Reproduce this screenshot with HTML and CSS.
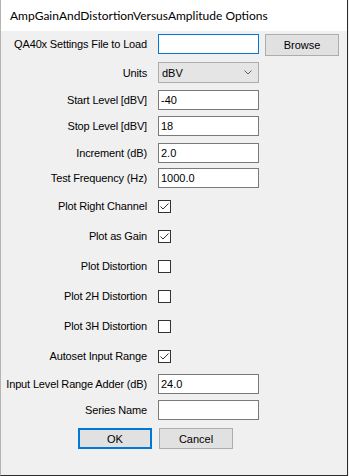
FILE: index.html
```html
<!DOCTYPE html>
<html lang="en">
<head>
    <meta charset="UTF-8">
    <meta name="viewport" content="width=device-width, initial-scale=1.0">
    <title>AmpGainAndDistortionVersusAmplitude Options</title>
    <link rel="stylesheet" href="styles.css">
</head>
<body>
    <div class="window">
        <div class="titlebar">AmpGainAndDistortionVersusAmplitude Options</div>
        <form class="content">
            <div class="row row-file">
                <label class="label">QA40x Settings File to Load</label>
                <input class="text focused" type="text" value="">
                <button class="btn browse" type="button">Browse</button>
            </div>
            <div class="row row-combo mt6">
                <label class="label">Units</label>
                <div class="combo">
                    <span>dBV</span>
                    <svg class="chevron" width="8" height="5" viewBox="0 0 8 5"><polyline points="0.5,0.5 4,4 7.5,0.5" fill="none" stroke="#606060" stroke-width="1"/></svg>
                </div>
            </div>
            <div class="row mt7">
                <label class="label">Start Level [dBV]</label>
                <input class="text" type="text" value="-40">
            </div>
            <div class="row mt6">
                <label class="label">Stop Level [dBV]</label>
                <input class="text" type="text" value="18">
            </div>
            <div class="row mt7">
                <label class="label">Increment (dB)</label>
                <input class="text" type="text" value="2.0">
            </div>
            <div class="row mt5">
                <label class="label">Test Frequency (Hz)</label>
                <input class="text" type="text" value="1000.0">
            </div>

            <!-- Checkbox rows -->
            <div class="row mt8">
                <label class="label">Plot Right Channel</label>
                <span class="check"><svg width="11" height="11" viewBox="0 0 11 11"><polyline points="1.5,5.5 4,8 9.5,2.5" fill="none" stroke="#333" stroke-width="1"/></svg></span>
            </div>
            <div class="row mt10">
                <label class="label">Plot as Gain</label>
                <span class="check"><svg width="11" height="11" viewBox="0 0 11 11"><polyline points="1.5,5.5 4,8 9.5,2.5" fill="none" stroke="#333" stroke-width="1"/></svg></span>
            </div>
            <div class="row mt10">
                <label class="label">Plot Distortion</label>
                <span class="check"></span>
            </div>
            <div class="row mt10">
                <label class="label">Plot 2H Distortion</label>
                <span class="check"></span>
            </div>
            <div class="row mt10">
                <label class="label">Plot 3H Distortion</label>
                <span class="check"></span>
            </div>
            <div class="row mt10">
                <label class="label">Autoset Input Range</label>
                <span class="check"><svg width="11" height="11" viewBox="0 0 11 11"><polyline points="1.5,5.5 4,8 9.5,2.5" fill="none" stroke="#333" stroke-width="1"/></svg></span>
            </div>

            <div class="row mt8">
                <label class="label">Input Level Range Adder (dB)</label>
                <input class="text" type="text" value="24.0">
            </div>
            <div class="row mt6">
                <label class="label">Series Name</label>
                <input class="text" type="text" value="">
            </div>
            <div class="row row-buttons mt8">
                <button class="btn default" type="submit">OK</button>
                <button class="btn" type="button">Cancel</button>
            </div>
        </form>
    </div>
</body>
</html>
```

FILE: styles.css
```css
body {
    margin: 0;
    background-color: #f0f0f0;
    font-family: "Liberation Sans", Arial, sans-serif;
    font-size: 11px;
    color: #000;
}

.window {
    width: 348px;
    height: 476px;
    box-sizing: border-box;
    background-color: #f0f0f0;
    border-left: 1px solid #b4b4b4;
    border-right: 1px solid #2b2b2b;
    border-bottom: 1px solid #2b2b2b;
}

.titlebar {
    height: 31px;
    line-height: 31px;
    padding-left: 9px;
    background-color: #fff;
    font-family: Lato, "Open Sans", sans-serif;
    font-size: 12px;
}

.content {
    display: flex;
    flex-direction: column;
    padding-top: 3px;
}

.row {
    display: flex;
    align-items: center;
    height: 20px;
}

.row-file {
    height: 22px;
    align-items: flex-start;
}

.row-file .label {
    line-height: 20px;
}

.row-combo {
    height: 21px;
}

.mt5 { margin-top: 5px; }
.mt6 { margin-top: 6px; }
.mt7 { margin-top: 7px; }
.mt8 { margin-top: 8px; }
.mt10 { margin-top: 10px; }

.label {
    width: 146px;
    margin-right: 11px;
    text-align: right;
    white-space: nowrap;
    letter-spacing: -0.15px;
}

.text {
    width: 101px;
    height: 20px;
    box-sizing: border-box;
    margin: 0;
    padding: 0 2px;
    border: 1px solid #7a7a7a;
    background-color: #fff;
    font: inherit;
    color: #000;
    outline: none;
}

.text.focused {
    border-color: #0078d7;
}

.combo {
    width: 101px;
    height: 21px;
    box-sizing: border-box;
    display: flex;
    align-items: center;
    justify-content: space-between;
    padding: 0 6px 0 3px;
    border: 1px solid #adadad;
    background-color: #e5e5e5;
}

.btn {
    width: 74px;
    height: 21px;
    box-sizing: border-box;
    margin: 0;
    padding: 0;
    border: 1px solid #adadad;
    background-color: #e1e1e1;
    font: inherit;
    color: #000;
}

.btn.default {
    border: 2px solid #0078d7;
}

.browse {
    margin-left: 6px;
    height: 22px;
}

.check {
    width: 13px;
    height: 13px;
    box-sizing: border-box;
    border: 1px solid #333;
    background-color: #fff;
    display: flex;
    align-items: center;
    justify-content: center;
}

.check svg {
    display: block;
}

.row-buttons {
    height: 21px;
    padding-left: 77px;
    gap: 7px;
}
```
